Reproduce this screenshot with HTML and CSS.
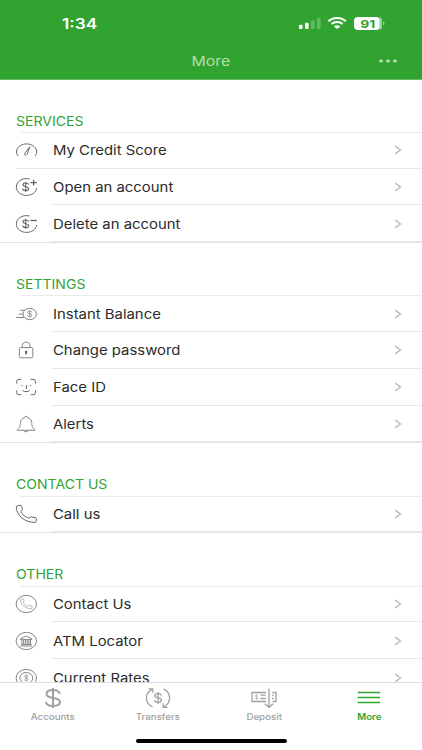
FILE: index.html
```html
<!DOCTYPE html>
<html lang="en">
<head>
  <meta charset="utf-8">
  <title>More</title>
  <link rel="stylesheet" href="styles.css">
</head>
<body>

<svg class="defs">
  <symbol id="chevron" viewBox="0 0 8 10"><path d="M1.2 1.2 6.4 5 1.2 8.8"/></symbol>
  <symbol id="dollar" viewBox="0 0 10 14"><path d="M9 4.2C8.7 2.8 7.3 2 5 2 2.700 2 1.300 2.900 1.300 4.400 1.300 8 9.100 5.800 9.100 9.500 9.100 11.100 7.500 12 5 12 2.500 12 1 11 .8 9.500M5 0V14"/></symbol>
</svg>

<header class="header">
  <div class="status">
    <span class="time">1:34</span>
    <svg class="signals" width="88" height="16" viewBox="0 0 88 16">
      <rect x="1" y="9.700" width="3.600" height="4.200" rx="1"/>
      <rect x="7" y="7.700" width="3.600" height="6.200" rx="1"/>
      <rect class="dim" x="13" y="5.400" width="3.600" height="8.500" rx="1"/>
      <rect class="dim" x="19" y="2.800" width="3.600" height="11.100" rx="1"/>
      <g class="wifi">
        <path d="M30.400 6.300C35 1.900 43.200 1.900 47.800 6.300"/>
        <path d="M33.500 8.900C36.600 6.200 41.600 6.200 44.700 8.900"/>
      </g>
      <path d="M39.100 14 35.900 11.500C37.600 9.900 40.600 9.900 42.300 11.500Z"/>
      <rect x="56" y="2" width="26" height="13" rx="4"/>
      <path class="dim2" d="M81.500 2C83.300 2.500 84 3.900 84 5.500V11.500C84 13.100 83.300 14.500 81.500 15ZM85 6.500C87 7.200 87 9.800 85 10.500Z"/>
      <text class="charge" x="62.300" y="12.500" textLength="15" lengthAdjust="spacingAndGlyphs">91</text>
    </svg>
  </div>
  <div class="nav">
    <h1 class="title">More</h1>
    <svg class="dots" width="20" height="6" viewBox="0 0 20 6"><ellipse cx="3" cy="3" rx="1.900" ry="1.600"/><ellipse cx="10" cy="3" rx="1.900" ry="1.600"/><ellipse cx="17" cy="3" rx="1.900" ry="1.600"/></svg>
  </div>
</header>

<main class="content">
  <section class="group">
    <h2 class="heading"><span>SERVICES</span></h2>
    <ul class="list">
      <li class="row wide">
        <svg class="icon dark" viewBox="0 0 24 24"><path d="M3.400 17.600H2.600C.8 14.600 1.300 11.200 3.800 8.800 8 4.900 15.200 4.900 19.300 8.800 21.900 11.200 22.400 14.600 20.600 17.600H19.800M9.500 15.700 14.800 8.700 12 16.400C11.200 17.800 8.800 17.200 9.500 15.700Z"/></svg>
        <span class="label">My Credit Score</span><svg class="arrow"><use href="#chevron"/></svg>
      </li>
      <li class="row">
        <svg class="icon dark" viewBox="0 0 24 24"><path d="M14.500 4C7.500 2.300 1.300 6.500 1.300 12 1.300 16.800 6 20.400 11.500 20.400 16.700 20.400 21.200 17.300 21.600 13"/><path class="sign" d="M15.400 7.700H21.800M18.600 4.800V10.600"/><use class="bold" href="#dollar" x="7" y="6.500" width="7.500" height="10.500"/></svg>
        <span class="label">Open an account</span><svg class="arrow"><use href="#chevron"/></svg>
      </li>
      <li class="row">
        <svg class="icon dark" viewBox="0 0 24 24"><path d="M14.500 4C7.500 2.300 1.300 6.500 1.300 12 1.300 16.800 6 20.400 11.500 20.400 16.700 20.400 21.200 17.300 21.600 13"/><path class="sign" d="M15.400 8.500H21.800"/><use class="bold" href="#dollar" x="7" y="6.500" width="7.500" height="10.500"/></svg>
        <span class="label">Delete an account</span><svg class="arrow"><use href="#chevron"/></svg>
      </li>
    </ul>
  </section>

  <section class="group">
    <h2 class="heading"><span>SETTINGS</span></h2>
    <ul class="list">
      <li class="row">
        <svg class="icon" viewBox="0 0 24 24"><ellipse cx="14.700" cy="12" rx="6.700" ry="5.700"/><path d="M5 8.300H10M3.500 12H8M1 15.500H10"/><use class="bold" href="#dollar" x="12" y="7.900" width="5.500" height="8"/></svg>
        <span class="label">Instant Balance</span><svg class="arrow"><use href="#chevron"/></svg>
      </li>
      <li class="row">
        <svg class="icon" viewBox="0 0 24 24"><rect x="4.400" y="9.600" width="13.400" height="10.200" rx="1.200"/><path d="M7.200 9.500V7.600C7.200 2.900 14.900 2.900 14.900 7.600V9.500"/><path class="key" d="M11.100 13.200V16.300M10.100 13.800H12.100"/></svg>
        <span class="label">Change password</span><svg class="arrow"><use href="#chevron"/></svg>
      </li>
      <li class="row">
        <svg class="icon dark" viewBox="0 0 24 24"><path d="M1.700 8.500V6.300Q1.700 4.300 4 4.300H6.300M15.700 4.300H18Q20.500 4.300 20.500 6.300V8.500M20.500 15.400V17.700Q20.500 19.700 18 19.700H15.700M6.300 19.700H4Q1.700 19.700 1.700 17.700V15.400M7 10V11.200M15.400 10V11.200M11.500 10V13.400H10.500M7.600 15.500C9.400 17.100 12.900 17.100 14.600 15.500"/></svg>
        <span class="label">Face ID</span><svg class="arrow"><use href="#chevron"/></svg>
      </li>
      <li class="row">
        <svg class="icon" viewBox="0 0 24 24"><path d="M2.300 17.500C5.500 15.400 5.200 13.500 5.500 10.500 5.700 7.700 7.300 6.300 9.600 5.700 9.600 3.800 12.600 3.800 12.600 5.700 15 6.300 16.500 7.700 16.700 10.500 17 13.500 16.700 15.400 19.900 17.500V18.300H2.300ZM8.700 18.400C9.200 20.300 13 20.300 13.500 18.400"/></svg>
        <span class="label">Alerts</span><svg class="arrow"><use href="#chevron"/></svg>
      </li>
    </ul>
  </section>

  <section class="group">
    <h2 class="heading"><span>CONTACT US</span></h2>
    <ul class="list">
      <li class="row">
        <svg class="icon dark" viewBox="0 0 24 24"><path id="phone" d="M1.300 4.600Q1.300 3.900 2 3.800L5.700 3.300Q6.300 3.300 6.500 3.800L7.400 7.300Q7.500 8 7 8.400L5.700 9.600C7.400 12.700 10 14.700 13.700 16.100L15.300 15.100Q15.800 14.800 16.400 14.900L21.100 15.900Q21.700 16.100 21.600 16.700L20.900 19.700Q20.700 20.400 20 20.400C9.800 20.500 1.300 13.400 1.300 4.600Z"/></svg>
        <span class="label">Call us</span><svg class="arrow"><use href="#chevron"/></svg>
      </li>
    </ul>
  </section>

  <section class="group">
    <h2 class="heading"><span>OTHER</span></h2>
    <ul class="list">
      <li class="row">
        <svg class="icon" viewBox="0 0 24 24"><ellipse cx="11.300" cy="12" rx="10.200" ry="8.600"/><use href="#phone" transform="translate(4.700 4.800) scale(.58)"/></svg>
        <span class="label">Contact Us</span><svg class="arrow"><use href="#chevron"/></svg>
      </li>
      <li class="row">
        <svg class="icon" viewBox="0 0 24 24"><ellipse cx="11.300" cy="12" rx="10.200" ry="8.600"/><path d="M5.500 9.800 11.200 7 16.900 9.800V10.400H5.500ZM7 10.500V15.300M8.700 10.500V15.300M10.400 10.500V15.300M12.200 10.500V15.300M13.900 10.500V15.300M15.500 10.500V15.300M6 15.500H16.500M5.300 17H17.100"/></svg>
        <span class="label">ATM Locator</span><svg class="arrow"><use href="#chevron"/></svg>
      </li>
      <li class="row">
        <svg class="icon" viewBox="0 0 24 24"><ellipse cx="11.300" cy="12" rx="10.200" ry="8.600"/><ellipse cx="11.300" cy="12" rx="6.500" ry="5.500"/><use class="bold" href="#dollar" x="8.800" y="8.300" width="5" height="7.300"/></svg>
        <span class="label">Current Rates</span><svg class="arrow"><use href="#chevron"/></svg>
      </li>
    </ul>
  </section>
</main>

<footer class="footer">
  <nav class="tabs">
    <a class="tab">
      <svg class="tab-icon" viewBox="0 0 28 22"><path class="thick" d="M20.600 6.800C20.200 4.400 17.700 3.100 14 3.100 10.200 3.100 7.500 4.600 7.500 7 7.500 13 21 9 21 15 21 17.600 18 18.900 14 18.900 9.800 18.900 7.200 17.300 6.900 14.800M14 1V21"/></svg>
      <span>Accounts</span>
    </a>
    <a class="tab">
      <svg class="tab-icon" viewBox="0 0 28 22"><path d="M8.500 19.800C.6 16 .4 6.600 7.800 2.600M4.500 1.800H8.800V5.800M19.700 1.800C27.400 5.800 27.500 15.500 20.200 19.700M23.500 20.300H19.200V16.200"/><use class="bold" href="#dollar" x="9.700" y="5" width="8.600" height="12"/></svg>
      <span>Transfers</span>
    </a>
    <a class="tab">
      <svg class="tab-icon" viewBox="0 0 28 22"><path d="M16 14.500H2V5.500H16M22.500 5.500H26V14.500H22.500M10.500 8.200H15.500M10.500 11.500H15.500M22 8.200H23.700M22 11.500H23.700M19 1.500V20M14.800 16.700 19 20.300 23.200 16.700"/><use class="bold" href="#dollar" x="4.500" y="7.200" width="4" height="5.500"/></svg>
      <span>Deposit</span>
    </a>
    <a class="tab active">
      <svg class="tab-icon" viewBox="0 0 28 22"><path d="M2.700 5.500H25.200M2.700 10.500H25.200M2.700 15.500H25.200"/></svg>
      <span>More</span>
    </a>
  </nav>
  <div class="home"></div>
</footer>

</body>
</html>
```

FILE: styles.css
```css
* { box-sizing: border-box; margin: 0; padding: 0; }

body {
  display: flex;
  flex-direction: column;
  height: 750px;
  overflow: hidden;
  background: #fff;
  color: #2b2b2b;
  font-family: Inter, Roboto, "Liberation Sans", sans-serif;
  font-size: 13px;
}

.defs { display: none; }

/* header */
.header {
  flex: none;
  height: 80px;
  padding-top: 15px;
  background: #31a331;
  border-bottom: 1px solid #64b964;
  color: #fff;
}
.status {
  display: flex;
  justify-content: space-between;
  height: 16px;
  padding: 0 36px 0 61.500px;
}
.time {
  font-size: 14px;
  font-weight: 600;
  line-height: 18px;
  transform: scaleX(1.23);
  transform-origin: left;
}
.signals { fill: #fff; }
.dim { opacity: .25; }
.dim2 { fill: #98d198; }
.wifi { fill: none; stroke: #fff; stroke-width: 2; }
.charge { fill: #31a331; font-size: 11px; font-weight: 700; }
.nav {
  display: grid;
  grid-template-columns: 1fr auto 1fr;
  align-items: center;
  height: 30px;
  margin-top: 15px;
  padding: 0 24px;
}
.title {
  grid-column: 2;
  color: #b5dfa9;
  font-size: 13px;
  font-weight: 400;
  transform: scaleX(1.22);
}
.dots { justify-self: end; fill: #c0e6b4; }

/* list */
.content { flex: 1; min-height: 0; overflow: hidden; }
.heading {
  display: flex;
  align-items: flex-end;
  height: 53.300px;
  padding: 0 0 3.800px 16px;
  color: #31a331;
  font-size: 13px;
  font-weight: 400;
  line-height: 16px;
}
.group:first-child .heading { height: 51.800px; padding-bottom: 3px; }
.heading span { transform: scaleX(1.08); transform-origin: left; }
.list {
  list-style: none;
  background: linear-gradient(#ebebeb, #ebebeb) 20px 0 / 100% 1px no-repeat;
  border-bottom: 1px solid #e2e2e2;
  margin-bottom: -1px;
}
.row {
  display: flex;
  align-items: center;
  height: 36.750px;
  padding: 0 20px 0 15px;
  background: linear-gradient(#e9e9e9, #e9e9e9) 52px 100% / 100% 1px no-repeat;
}
.row.wide { background-position: 16px 100%; }
.icon {
  flex: none;
  width: 24px;
  height: 24px;
  margin-right: 13.500px;
  fill: none;
  stroke: #858585;
  stroke-width: 1;
}
.icon.dark { stroke: #666; }
.bold { stroke-width: 1.500; }
.sign { stroke-width: 1.300; }
.key { stroke: #444; stroke-width: 1.500; }
.label { transform: scaleX(1.145); transform-origin: left; }
.arrow {
  width: 8px;
  height: 10px;
  margin-left: auto;
  fill: none;
  stroke: #bdbdbd;
  stroke-width: 1.500;
}

/* bottom bar */
.footer {
  flex: none;
  height: 68px;
  padding-top: 4px;
  background: #fff;
  border-top: 1px solid #dedede;
}
.tabs { display: flex; height: 52px; }
.tab {
  display: flex;
  flex: 1;
  flex-direction: column;
  align-items: center;
  color: #a0a0a0;
  font-size: 8.300px;
  font-weight: 500;
  line-height: 12px;
}
.tab span { margin-top: 1.500px; transform: scaleX(1.17); }
.tab-icon {
  width: 28px;
  height: 22px;
  fill: none;
  stroke: #a0a0a0;
  stroke-width: 1.300;
}
.tab-icon .thick { stroke-width: 2; }
.tab.active { color: #31a331; font-weight: 600; }
.active .tab-icon { stroke: #31a331; }
.home {
  width: 151px;
  height: 4px;
  margin: 0 auto;
  background: #000;
  border-radius: 2px;
}
```
